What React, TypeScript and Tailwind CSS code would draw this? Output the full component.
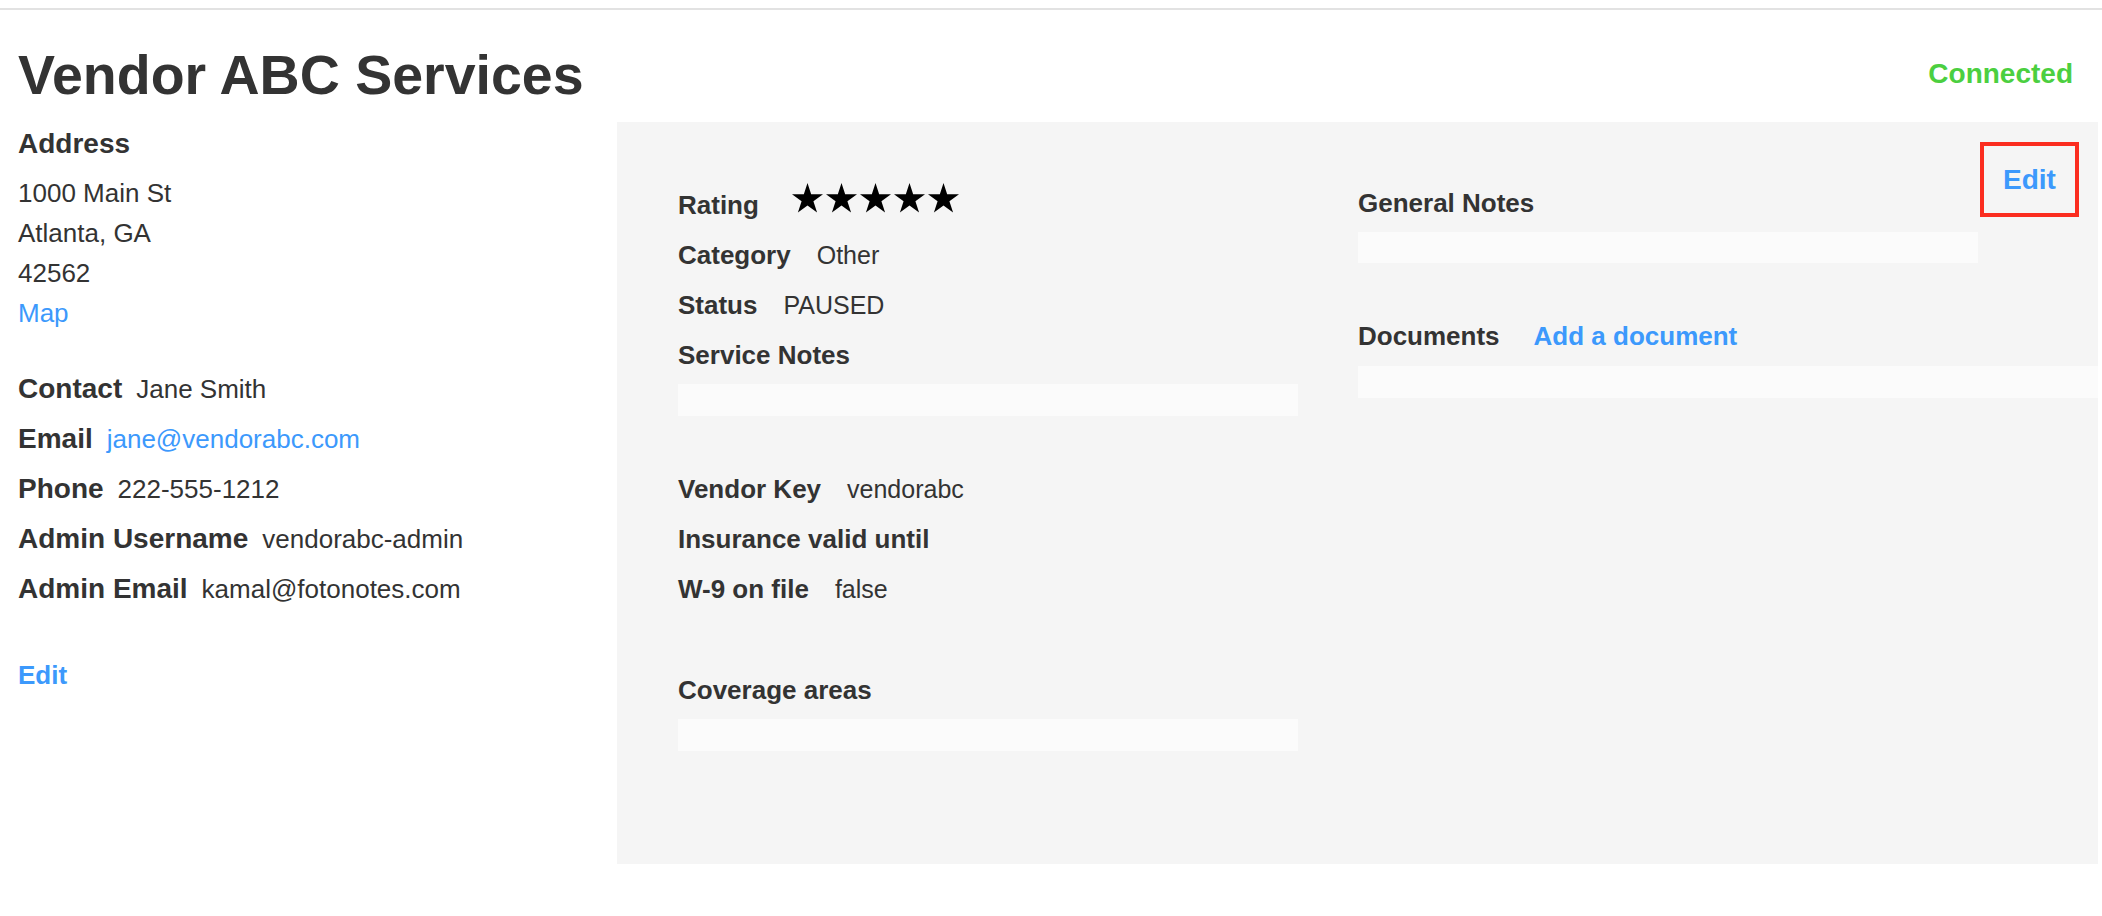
import React from "react";

const BLUE = "text-[#3c99fc]";

function Star() {
  return (
    <svg width="31" height="29.5" viewBox="0 0 190.2 180.9" className="block">
      <polygon
        points="95.1,0 117.55,69.1 190.2,69.1 131.43,111.8 153.9,180.9 95.1,138.2 36.3,180.9 58.77,111.8 0,69.1 72.65,69.1"
        fill="#000"
      />
    </svg>
  );
}

function LeftRow({ label, value, link }: { label: string; value: string; link?: boolean }) {
  return (
    <div className="flex h-[50px] items-baseline whitespace-nowrap">
      <span className="text-[28px] leading-[50px] font-bold">{label}</span>
      <span className={`ml-[14px] text-[26px] leading-[50px] ${link ? BLUE : ""}`}>{value}</span>
    </div>
  );
}

function PanelRow({ label, value }: { label: string; value?: string }) {
  return (
    <div className="flex h-[50px] items-baseline whitespace-nowrap">
      <span className="text-[26px] leading-[50px] font-bold">{label}</span>
      {value ? <span className="ml-[26px] text-[25px] leading-[50px]">{value}</span> : null}
    </div>
  );
}

export default function App() {
  return (
    <div className="w-[2102px] h-[916px] overflow-hidden bg-white text-[#333333] font-['Liberation_Sans',Arial,Helvetica,sans-serif]">
      <div className="pt-[8px]">
        <div className="h-[2px] bg-[#e2e2e2]" />
      </div>

      <div className="mt-[37px] flex h-[56px] justify-between pl-[18px] pr-[29px]">
        <h1 className="text-[55.5px] leading-[56px] font-bold whitespace-nowrap">Vendor ABC Services</h1>
        <div className="mt-[12.5px] text-[28px] leading-[28px] font-bold text-[#4bcf40]">Connected</div>
      </div>

      <div className="mt-[19px] flex items-start">
        <div className="w-[617px] shrink-0 pl-[18px] pt-[2px]">
          <div className="text-[28px] leading-[40px] font-bold">Address</div>
          <div className="mt-[9px] text-[26px] leading-[40px]">
            <div>1000 Main St</div>
            <div>Atlanta, GA</div>
            <div>42562</div>
            <div className={BLUE}>Map</div>
          </div>
          <div className="mt-[31px]">
            <LeftRow label="Contact" value="Jane Smith" />
            <LeftRow label="Email" value="jane@vendorabc.com" link />
            <LeftRow label="Phone" value="222-555-1212" />
            <LeftRow label="Admin Username" value="vendorabc-admin" />
            <LeftRow label="Admin Email" value="kamal@fotonotes.com" />
          </div>
          <div className={`mt-[36px] text-[26px] leading-[50px] font-bold ${BLUE}`}>Edit</div>
        </div>

        <div className="relative flex h-[742px] w-[1481px] shrink-0 bg-[#f5f5f5] pl-[61px]">
          <div className="w-[620px] shrink-0 pt-[58px]">
            <div className="flex h-[50px] items-start whitespace-nowrap">
              <span className="text-[26px] leading-[50px] font-bold">Rating</span>
              <div className="ml-[33px] mt-[3px] flex gap-[3px]">
                <Star />
                <Star />
                <Star />
                <Star />
                <Star />
              </div>
            </div>
            <PanelRow label="Category" value="Other" />
            <PanelRow label="Status" value="PAUSED" />
            <PanelRow label="Service Notes" />
            <div className="mt-[4px] h-[32px] w-[620px] bg-[#fbfbfb]" />

            <div className="mt-[48px]">
              <PanelRow label="Vendor Key" value="vendorabc" />
              <PanelRow label="Insurance valid until" />
              <PanelRow label="W-9 on file" value="false" />
            </div>

            <div className="mt-[51px]">
              <PanelRow label="Coverage areas" />
            </div>
            <div className="mt-[4px] h-[32px] w-[620px] bg-[#fbfbfb]" />
          </div>

          <div className="ml-[60px] flex-1 pt-[56px]">
            <PanelRow label="General Notes" />
            <div className="mt-[4px] h-[31px] w-[620px] bg-[#fbfbfb]" />
            <div className="mt-[48px] flex h-[50px] items-baseline whitespace-nowrap">
              <span className="text-[26px] leading-[50px] font-bold">Documents</span>
              <span className={`ml-[34px] text-[26px] leading-[50px] font-bold ${BLUE}`}>Add a document</span>
            </div>
            <div className="mt-[5px] h-[32px] w-full bg-[#fbfbfb]" />
          </div>

          <div className="absolute left-[1363px] top-[20px] flex h-[75px] w-[99px] items-center justify-center border-[4px] border-[#fb2d1f]">
            <span className={`text-[28px] leading-[28px] font-bold ${BLUE}`}>Edit</span>
          </div>
        </div>
      </div>
    </div>
  );
}
